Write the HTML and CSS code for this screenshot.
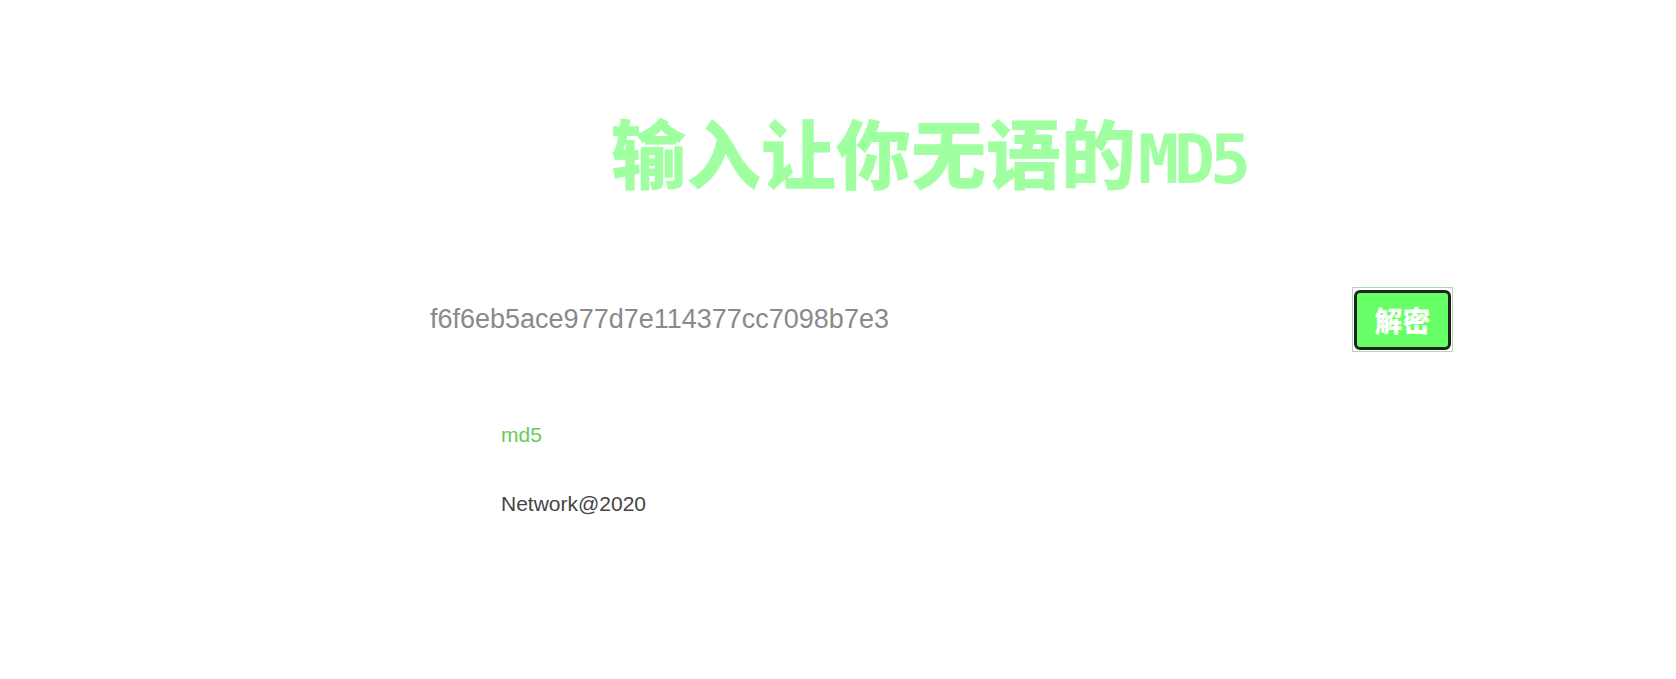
FILE: index.html
```html
<!DOCTYPE html>
<html lang="zh-CN">
<head>
<meta charset="utf-8">
<title>MD5</title>
<link rel="stylesheet" href="styles.css">
</head>
<body>
<div class="page">
  <h1 class="title">输入让你无语的<span class="title-latin">MD5</span></h1>
  <form class="search-row" onsubmit="return false">
    <input class="hash-input" type="text" placeholder="f6f6eb5ace977d7e114377cc7098b7e3">
    <div class="btn-frame"><button class="btn" type="submit">解密</button></div>
  </form>
  <div class="footer">
    <p class="footer-link">md5</p>
    <p class="footer-copy">Network@2020</p>
  </div>
</div>
</body>
</html>
```
FILE: styles.css
```css
html, body {
  margin: 0;
  padding: 0;
  background: #ffffff;
}
.page {
  width: 1676px;
  height: 679px;
  box-sizing: border-box;
  padding-top: 97px;
  font-family: "Liberation Sans", Arial, sans-serif;
}
.title {
  margin: 0;
  padding-left: 611px;
  font-family: "Noto Sans CJK SC", sans-serif;
  font-weight: 900;
  font-size: 75px;
  line-height: 108px;
  color: #a0ffa0;
  white-space: nowrap;
}
.title-latin {
  font-family: "DejaVu Sans Mono", monospace;
  font-weight: bold;
  font-size: 68px;
  letter-spacing: -5px;
  margin-left: 2px;
}
.search-row {
  margin: 0;
  margin-top: 73px;
  padding-left: 430px;
  display: flex;
  align-items: center;
}
.hash-input {
  width: 922px;
  height: 64px;
  box-sizing: border-box;
  border: none;
  outline: none;
  padding: 0;
  font-family: "Liberation Sans", Arial, sans-serif;
  font-size: 27px;
  color: #888;
  background: transparent;
}
.hash-input::placeholder {
  color: #8a8a8a;
}
.btn-frame {
  border: 1px solid #a9dca9;
  padding: 2px 1px 1px 1px;
  display: flex;
}
.btn {
  width: 97px;
  height: 60px;
  box-sizing: border-box;
  border: 3px solid #222;
  border-radius: 6px;
  background: #66ff66;
  color: #ffffff;
  font-family: "Noto Sans CJK SC", sans-serif;
  font-weight: 900;
  font-size: 28px;
  line-height: 1;
  padding: 0;
  cursor: pointer;
}
.footer {
  padding-left: 501px;
  margin-top: 71px;
}
.footer p {
  margin: 0;
  font-size: 21px;
  line-height: 24px;
}
.footer-link {
  color: #66cc55;
}
.footer-copy {
  margin-top: 45px !important;
  color: #444;
}
```
